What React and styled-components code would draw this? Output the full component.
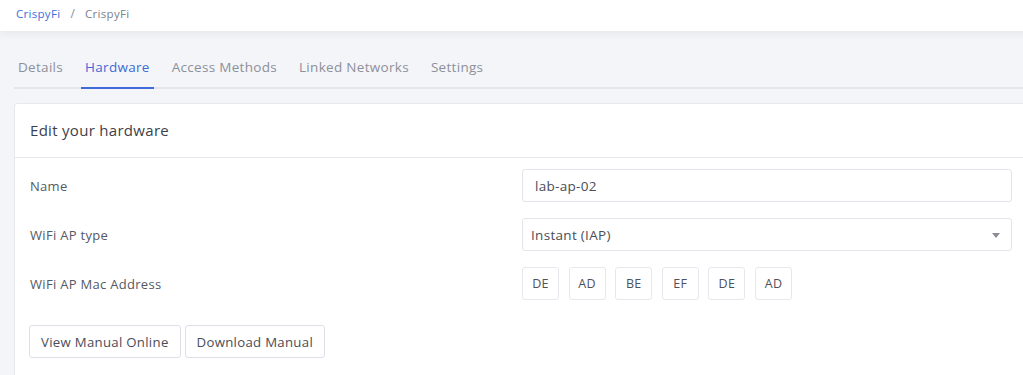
import React, { useState } from 'react'
import styled, { createGlobalStyle } from 'styled-components'

const GlobalStyle = createGlobalStyle`
  html, body {
    margin: 0;
    padding: 0;
    overflow: hidden;
    background-color: #f4f5f9;
    font-family: "Open Sans", "Liberation Sans", sans-serif;
    letter-spacing: 0.3px;
  }
  * { box-sizing: border-box; }
`;

const tabs = ['Details', 'Hardware', 'Access Methods', 'Linked Networks', 'Settings'];
const macParts = ['DE', 'AD', 'BE', 'EF', 'DE', 'AD'];

export default function App() {
  const [active, setActive] = useState(1);
  const [name, setName] = useState('lab-ap-02');

  return (
    <>
      <GlobalStyle />
      <Page>
        <Header>
          <Crumb $link>CrispyFi</Crumb>
          <Divider>/</Divider>
          <Crumb>CrispyFi</Crumb>
        </Header>
        <Main>
          <TabBar>
            {tabs.map((tab, index) => (
              <Tab
                key={tab}
                $active={index === active}
                onClick={() => setActive(index)}
              >
                {tab}
              </Tab>
            ))}
          </TabBar>
          <Card>
            <CardHeader>Edit your hardware</CardHeader>
            <CardBody>
              <FormRow>
                <Label>Name</Label>
                <TextInput value={name} onChange={(e) => setName(e.target.value)} />
              </FormRow>
              <FormRow>
                <Label>WiFi AP type</Label>
                <SelectBox>
                  <span>Instant (IAP)</span>
                  <Caret />
                </SelectBox>
              </FormRow>
              <FormRow>
                <Label>WiFi AP Mac Address</Label>
                <MacList>
                  {macParts.map((part, i) => (
                    <MacBox key={i}>{part}</MacBox>
                  ))}
                </MacList>
              </FormRow>
              <Actions>
                <Button>View Manual Online</Button>
                <Button>Download Manual</Button>
              </Actions>
            </CardBody>
          </Card>
        </Main>
      </Page>
    </>
  );
}

const Page = styled.div`
  width: calc(100% + 6px);
  min-height: 375px;
  background-color: #f4f5f9;
`;

const Header = styled.div`
  height: 31px;
  background-color: #ffffff;
  display: flex;
  align-items: center;
  padding: 0 0 4px 16px;
  gap: 10px;
  font-size: 11.5px;
  box-shadow: 0 3px 9px rgba(0, 0, 0, 0.06);
  position: relative;
`;

const Crumb = styled.span`
  color: ${(p) => (p.$link ? '#3b6fd9' : '#7d818c')};
`;

const Divider = styled.span`
  color: #8a8e97;
  font-size: 12px;
`;

const Main = styled.div`
  padding: 20px 0 0 14px;
`;

const TabBar = styled.div`
  display: flex;
  gap: 14px;
  border-bottom: 2px solid #e4e6eb;
  height: 38px;
  margin-bottom: 14px;
`;

const Tab = styled.div`
  padding: 7px 4px 0;
  margin-bottom: -2px;
  font-size: 13.5px;
  color: ${(p) => (p.$active ? '#3f6ad8' : '#8c9099')};
  border-bottom: 2px solid ${(p) => (p.$active ? '#3f6ad8' : 'transparent')};
  cursor: pointer;
`;

const Card = styled.div`
  background-color: #ffffff;
  border: 1px solid #e6e8ee;
  border-radius: 3px;
`;

const CardHeader = styled.div`
  height: 54px;
  display: flex;
  align-items: center;
  padding: 0 15px 2px;
  border-bottom: 1px solid #e6e8ee;
  font-size: 15px;
  color: #3c3f4a;
`;

const CardBody = styled.div`
  padding: 11px 16px 30px 15px;
`;

const FormRow = styled.div`
  display: grid;
  grid-template-columns: 492px 1fr;
  align-items: center;
  margin-bottom: 16px;
`;

const Label = styled.div`
  font-size: 13px;
  color: #555964;
`;

const TextInput = styled.input`
  height: 33px;
  border: 1px solid #e3e5eb;
  border-radius: 3px;
  padding: 0 12px;
  font-family: inherit;
  letter-spacing: 0.3px;
  font-size: 13.5px;
  color: #4a4d57;
  outline: none;
`;

const SelectBox = styled.div`
  height: 33px;
  border: 1px solid #e3e5eb;
  border-radius: 3px;
  padding: 0 11px 0 8px;
  display: flex;
  align-items: center;
  justify-content: space-between;
  font-size: 13.5px;
  color: #4a4d57;
`;

const Caret = styled.span`
  width: 0;
  height: 0;
  border-left: 4px solid transparent;
  border-right: 4px solid transparent;
  border-top: 5px solid #8a8d95;
  margin-top: 2px;
`;

const MacList = styled.div`
  display: flex;
  gap: 9.6px;
`;

const MacBox = styled.div`
  width: 37px;
  height: 33px;
  border: 1px solid #e6e8ee;
  border-radius: 3px;
  display: flex;
  align-items: center;
  justify-content: center;
  font-size: 12.5px;
  color: #4f525c;
`;

const Actions = styled.div`
  display: flex;
  gap: 4px;
  padding-top: 9px;
  margin-left: -1px;
`;

const Button = styled.button`
  height: 33px;
  padding: 0 11px;
  background-color: #ffffff;
  border: 1px solid #dcdfe6;
  border-radius: 3px;
  font-family: inherit;
  letter-spacing: 0.3px;
  font-size: 13.2px;
  color: #4a4d57;
  cursor: pointer;
`;
